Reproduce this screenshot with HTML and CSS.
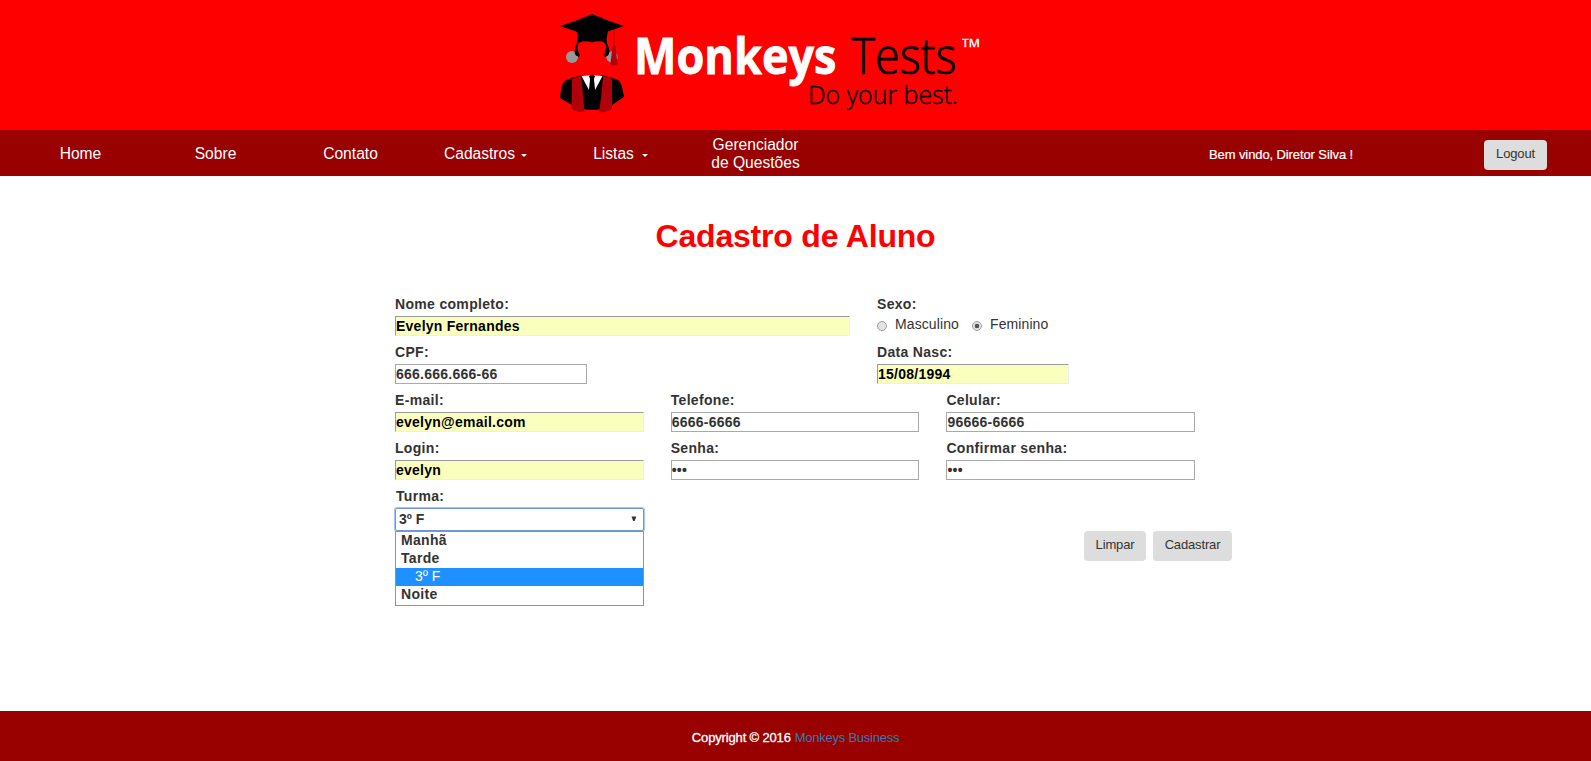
FILE: index.html
```html
<!DOCTYPE html>
<html lang="pt-BR">
<head>
<meta charset="utf-8">
<title>Monkeys Tests - Cadastro de Aluno</title>
<link rel="stylesheet" href="styles.css">
</head>
<body>
<header class="banner">
  <svg class="logo" width="460" height="130" viewBox="540 0 460 130" role="img" aria-label="Monkeys Tests">
    <circle cx="572" cy="57" r="6" fill="#999"/>
    <circle cx="612" cy="57" r="5.7" fill="#999"/>
    <path d="M577 30L577.500 39Q577 43 575.500 47Q573.500 52 576 55.500L579 57L580 55Q574 44 582 41.500Q587 40.500 592 42.500Q597 40.500 602 41.500Q609 44 604 55L605 57L608 55.500Q610.500 52 608.500 47Q606.500 43 606.500 40L608 30Z" fill="#000"/>
    <path d="M560 26Q577 21 592 14Q608 21 624 26L606.500 32L592 34L577.500 32Z" fill="#000"/>
    <path d="M614 29V47" stroke="#b00009" stroke-width="1" fill="none"/>
    <path d="M612.500 46Q614 44.500 615.500 46L617.500 64Q614 67 610.500 64Z" fill="#b00009"/>
    <path d="M581 75.500Q565 79 563 83Q561 87 560 98L572 105Q592 115 612 105L624 97Q622 82 618 80Q611 77 603 75.500Z" fill="#000"/>
    <path d="M581.500 76Q592 74.500 602.500 76L595 90L592 79L589 90Z" fill="#fff"/>
    <path d="M589 76Q592 73.500 595 76L594 79L595 90L592 95L589 90L590 79Z" fill="#000"/>
    <path d="M572 79Q577 76 581 76Q583 93 584.500 112Q577 112.500 571.500 109Z" fill="#b00009"/>
    <path d="M603 76Q608 76 612 79L612 109Q606 112.500 599 112.500Q602 93 603 76Z" fill="#b00009"/>
    <text class="logo-bold" x="634" y="74" textLength="202.500" lengthAdjust="spacingAndGlyphs">Monkeys</text>
    <text class="logo-light" x="851.500" y="74" textLength="105" lengthAdjust="spacingAndGlyphs">Tests</text>
    <text class="logo-tag" x="808" y="104" textLength="150" lengthAdjust="spacingAndGlyphs">Do your best.</text>
    <text class="logo-tm" x="961.500" y="56" textLength="19" lengthAdjust="spacingAndGlyphs">™</text>
  </svg>
</header>
<nav class="nav">
  <ul class="menu">
    <li><a>Home</a></li>
    <li><a>Sobre</a></li>
    <li><a>Contato</a></li>
    <li><a>Cadastros<span class="caret"></span></a></li>
    <li><a>Listas<span class="caret wide"></span></a></li>
    <li><a>Gerenciador<br>de Questões</a></li>
  </ul>
  <span class="welcome">Bem vindo, Diretor Silva !</span>
  <button class="btn logout">Logout</button>
</nav>
<main class="content">
  <h1>Cadastro de Aluno</h1>
  <form class="form">
    <div class="row split">
      <div class="field"><label>Nome completo:</label><div class="input filled">Evelyn Fernandes</div></div>
      <div class="field"><label>Sexo:</label>
        <div class="radios"><span class="radio"></span><span class="masc">Masculino</span><span class="radio on"></span><span>Feminino</span></div>
      </div>
    </div>
    <div class="row split">
      <div class="field"><label>CPF:</label><div class="input short">666.666.666-66</div></div>
      <div class="field"><label>Data Nasc:</label><div class="input short filled">15/08/1994</div></div>
    </div>
    <div class="row thirds">
      <div class="field"><label>E-mail:</label><div class="input filled">evelyn@email.com</div></div>
      <div class="field"><label>Telefone:</label><div class="input">6666-6666</div></div>
      <div class="field"><label>Celular:</label><div class="input">96666-6666</div></div>
    </div>
    <div class="row thirds">
      <div class="field"><label>Login:</label><div class="input filled">evelyn</div></div>
      <div class="field"><label>Senha:</label><div class="input password">•••</div></div>
      <div class="field"><label>Confirmar senha:</label><div class="input password">•••</div></div>
    </div>
    <div class="last">
      <div class="field turma"><label>Turma:</label>
        <div class="select"><span>3º F</span><svg width="6" height="6" viewBox="0 0 6 6"><path d="M.5.500H5.300L3.600 5H2.200Z" fill="#333"/></svg></div>
        <ul class="options"><li>Manhã</li><li>Tarde</li><li class="selected"><span>3º F</span></li><li>Noite</li></ul>
      </div>
      <div class="actions"><button class="btn clear" type="button">Limpar</button><button class="btn save" type="button">Cadastrar</button></div>
    </div>
  </form>
</main>
<footer class="footer"><span class="copy">Copyright © 2016</span><a>Monkeys Business</a></footer>
</body>
</html>
```
FILE: styles.css
```css
* { box-sizing: border-box; }
body {
  margin: 0;
  height: 761px;
  display: flex;
  flex-direction: column;
  background: #fff;
  color: #333;
  font: 14px/20px "Liberation Sans", Arial, sans-serif;
  overflow: hidden;
}
ul { list-style: none; margin: 0; padding: 0; }
.banner { height: 130px; background: #f00; padding-left: 540px; }
.logo { display: block; }
.logo-bold { font: 700 50px "Open Sans", sans-serif; fill: #fff; stroke: #fff; stroke-width: .8px; }
.logo-light { font: 300 50px "Open Sans", sans-serif; fill: #000; stroke: #000; stroke-width: .7px; }
.logo-tag { font: 300 26px "Open Sans", sans-serif; fill: #000; stroke: #000; stroke-width: .4px; }
.logo-tm { font: 600 24px "Open Sans", sans-serif; fill: #fff; }

.nav { height: 46px; background: #900; color: #fff; display: flex; padding-left: 13px; }
.menu { display: flex; }
.menu li { width: 135px; display: flex; align-items: center; justify-content: center; text-align: center; font-size: 15.600px; line-height: 18px; padding-top: 2px; }
.caret { display: inline-block; margin-left: 6px; vertical-align: 2px; border: 3px solid transparent; border-top-color: #fff; border-bottom: 0; }
.caret.wide { margin-left: 8px; }
.welcome { margin-left: 386px; width: 275px; line-height: 50px; font-size: 13px; letter-spacing: -.1px; -webkit-text-stroke: .2px #fff; }
.btn { height: 30px; padding: 0 0 3px; border: 0; border-radius: 4px; background: #ddd; color: #333; font: 13px "Liberation Sans", Arial, sans-serif; letter-spacing: -.15px; }
.logout { width: 63px; margin-top: 10px; }

.content { flex: 1; }
h1 { margin: 42px 0 0; text-align: center; font-size: 32px; line-height: 36px; letter-spacing: -.2px; color: #f00; }
.form { margin: 40px 0 0 395px; width: 838px; }
.row { height: 48px; display: grid; column-gap: 27px; }
.split { grid-template-columns: 455px 318px; }
.thirds { grid-template-columns: repeat(3, 248.700px); }
label { display: block; height: 22px; line-height: 21px; font-weight: 700; letter-spacing: .32px; }
.input { height: 20px; border: 1px solid #a9a9a9; font-weight: 700; line-height: 19px; letter-spacing: .25px; }
.input.filled { background: #faffbd; color: #000; border-color: #9a9a9a #eee #eee #9a9a9a; }
.short { width: 192px; }
.radios { display: flex; align-items: flex-start; line-height: 17px; letter-spacing: .1px; }
.radio { width: 10px; height: 10px; margin: 5px 8px 0 0; border: 1px solid #a0a0a0; border-radius: 50%; background: #e2e2e2; }
.radio.on { background: radial-gradient(circle, #555 0 2px, #e2e2e2 2.600px); }
.masc { width: 77px; }
.last { display: flex; }
.turma { width: 249px; }
.turma label { padding-left: 1px; }
.select { height: 23px; border: 1px solid #7396d5; border-radius: 2px; box-shadow: 0 0 0 1px #a5c3f5; display: flex; justify-content: space-between; align-items: center; padding: 0 6px 2px 3px; font-weight: 700; }
.options { border: 1px solid #7396d5; height: 75px; font-weight: 700; line-height: 16px; letter-spacing: .3px; position: relative; background: #fff; }
.options li { height: 18px; padding-left: 5px; }
.options .selected { padding-left: 19px; background: #1e90ff; color: #fff; font-weight: 400; letter-spacing: 0; }
.actions { margin: 45px 0 0 440px; display: flex; gap: 7px; }
.clear { width: 62px; }
.save { width: 79px; }
.footer { height: 50px; background: #900; color: #fff; display: flex; justify-content: center; gap: 4px; font-size: 13px; line-height: 53px; letter-spacing: -.15px; }
.copy { -webkit-text-stroke: .3px #fff; }
.footer a { color: #337ab7; letter-spacing: -.25px; }
```
